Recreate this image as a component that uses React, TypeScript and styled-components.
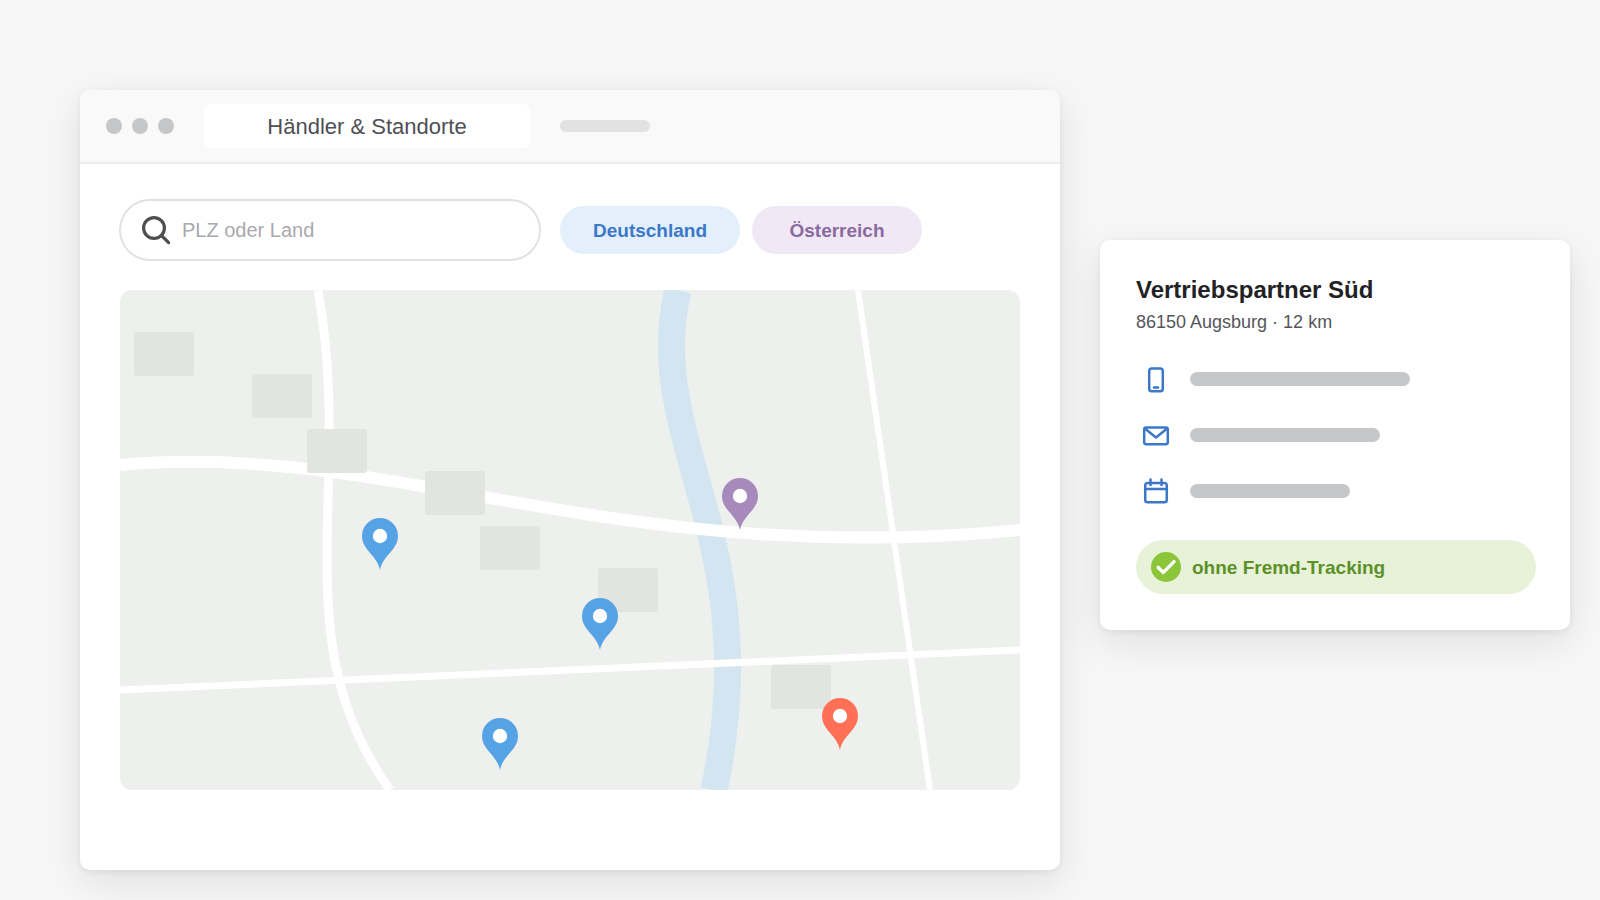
import React from "react";
import styled, { createGlobalStyle } from "styled-components";

const GlobalStyle = createGlobalStyle`
  *, *::before, *::after { box-sizing: border-box; }
  body {
    margin: 0;
    background: #f7f7f7;
    font-family: "Liberation Sans", Arial, Helvetica, sans-serif;
  }
`;

const Page = styled.main`
  display: grid;
  grid-template-columns: minmax(0, 980fr) minmax(0, 470fr);
  align-items: start;
  gap: 40px;
  min-height: 100vh;
  padding: 90px 30px 30px 80px;
`;

const Panel = styled.section`
  border-radius: 10px;
  background: #fff;
  box-shadow: 0 2px 6px rgba(30, 20, 40, 0.07), 0 12px 40px rgba(30, 20, 40, 0.1);
`;

const BrowserWindow = styled(Panel)`
  overflow: hidden;
`;

const TitleBar = styled.header`
  display: flex;
  align-items: center;
  gap: 30px;
  height: 74px;
  padding: 0 26px;
  border-bottom: 2px solid #ececec;
  background: #f9f9f9;
`;

const WindowDots = styled.div`
  display: flex;
  gap: 10px;
`;

const Dot = styled.span`
  width: 16px;
  height: 16px;
  border-radius: 50%;
  background: #c6c7c9;
`;

const TabTitle = styled.h1`
  flex: 0 1 326px;
  margin: 0;
  padding: 11px 0 9px;
  border-radius: 6px;
  background: #fff;
  color: #4e4e55;
  font-size: 22px;
  font-weight: 400;
  line-height: 24px;
  text-align: center;
`;

const Bar = styled.span<{ $width: number; $height: number; $color: string }>`
  flex: 0 1 ${(p) => p.$width}px;
  height: ${(p) => p.$height}px;
  border-radius: ${(p) => p.$height / 2}px;
  background: ${(p) => p.$color};
`;

const WindowBody = styled.div`
  display: flex;
  flex-direction: column;
  gap: 30px;
  padding: 36px 40px 80px;
`;

const Filters = styled.form`
  display: flex;
  align-items: center;
  gap: 20px;
`;

const SearchField = styled.label`
  display: flex;
  flex: 0 1 420px;
  align-items: center;
  gap: 10px;
  min-width: 0;
  height: 60px;
  padding: 0 19px;
  border: 1px solid #e1e1e2;
  border-radius: 30px;
  background: #fff;
  box-shadow: 0 0 0 1px #e1e1e2;

  svg {
    flex: none;
  }
`;

const SearchInput = styled.input`
  flex: 1;
  min-width: 0;
  padding: 0;
  border: 0;
  outline: 0;
  background: transparent;
  color: #4e4e55;
  font: 20px/24px "Liberation Sans", Arial, Helvetica, sans-serif;

  &::placeholder {
    color: #a9a9ae;
    opacity: 1;
  }
`;

const Chips = styled.div`
  display: flex;
  gap: 12px;
`;

const Chip = styled.button<{ $width: number; $bg: string; $fg: string }>`
  width: ${(p) => p.$width}px;
  height: 48px;
  padding: 2px 0 0;
  border: 0;
  border-radius: 24px;
  background: ${(p) => p.$bg};
  color: ${(p) => p.$fg};
  font: bold 19px/24px "Liberation Sans", Arial, Helvetica, sans-serif;
  cursor: pointer;
`;

const MapCanvas = styled.svg`
  display: block;
  width: 100%;
  height: auto;
  border-radius: 12px;
  background: #edf0ec;
`;

const Card = styled(Panel)`
  margin-top: 150px;
  padding: 36px 34px 36px 36px;
`;

const CardTitle = styled.h2`
  margin: 0 0 6px;
  color: #222226;
  font-size: 24px;
  line-height: 28px;
`;

const CardMeta = styled.p`
  margin: 0;
  color: #55555c;
  font-size: 18px;
  line-height: 24px;
`;

const ContactList = styled.ul`
  display: flex;
  flex-direction: column;
  gap: 26px;
  margin: 30px 0 34px;
  padding: 0;
  list-style: none;
`;

const ContactRow = styled.li`
  display: flex;
  align-items: center;
  gap: 14px;
  height: 30px;
`;

const ContactIcon = styled.svg`
  flex: none;
  width: 40px;
  height: 30px;
  fill: none;
  stroke: #3b78c8;
  stroke-width: 2.5;
  stroke-linecap: round;
  stroke-linejoin: round;
`;

const Badge = styled.p`
  display: flex;
  align-items: center;
  gap: 11px;
  height: 54px;
  margin: 0;
  padding: 0 15px;
  border-radius: 27px;
  background: #e7f2d9;
  color: #5b9127;
  font-size: 19px;
  font-weight: 700;
  line-height: 24px;
`;

const BadgeText = styled.span`
  padding-top: 2px;
`;

const buildings = [
  [14, 42],
  [132, 84],
  [187, 139],
  [305, 181],
  [360, 236],
  [478, 278],
  [651, 375],
];

const pins = [
  { x: 260, y: 280, color: "#55a2e4" },
  { x: 480, y: 360, color: "#55a2e4" },
  { x: 380, y: 480, color: "#55a2e4" },
  { x: 620, y: 240, color: "#a78abb" },
  { x: 720, y: 460, color: "#ff7056" },
];

function DealerMap() {
  return (
    <MapCanvas viewBox="0 0 900 500" role="img" aria-label="Karte der Standorte">
      <path d="M558 0C522 150 648 250 594 500" fill="none" stroke="#d2e5f1" strokeWidth="27" />
      <g fill="none" stroke="#fff">
        <path d="M0 175C270 150 495 280 900 240" strokeWidth="12" />
        <path d="M198 0C234 200 162 350 270 500" strokeWidth="9" />
        <path d="M0 400L900 360" strokeWidth="7" />
        <path d="M738 0L810 500" strokeWidth="6" />
      </g>
      {buildings.map(([x, y]) => (
        <rect key={x} x={x} y={y} width="60" height="44" rx="3" fill="#e2e5df" />
      ))}
      {pins.map((pin) => (
        <g key={pin.x} transform={`translate(${pin.x} ${pin.y})`}>
          <path
            d="M0 0C-3 -15 -18 -20 -18 -34A18 18 0 0 1 18 -34C18 -20 3 -15 0 0Z"
            fill={pin.color}
          />
          <circle cy="-34" r="7.2" fill="#fff" />
        </g>
      ))}
    </MapCanvas>
  );
}

export default function App() {
  return (
    <>
      <GlobalStyle />
      <Page>
        <BrowserWindow>
          <TitleBar>
            <WindowDots>
              <Dot />
              <Dot />
              <Dot />
            </WindowDots>
            <TabTitle>Händler &amp; Standorte</TabTitle>
            <Bar $width={90} $height={12} $color="#e2e2e3" />
          </TitleBar>
          <WindowBody>
            <Filters onSubmit={(e) => e.preventDefault()}>
              <SearchField>
                <svg width="32" height="32" viewBox="0 0 32 32" fill="none" stroke="#4e4e50" strokeWidth="3.2" strokeLinecap="round" aria-hidden="true">
                  <circle cx="14" cy="14" r="10.4" />
                  <path d="M21.6 21.6L28.6 28.6" />
                </svg>
                <SearchInput type="text" placeholder="PLZ oder Land" aria-label="PLZ oder Land" />
              </SearchField>
              <Chips>
                <Chip type="button" $width={180} $bg="#e3effb" $fg="#3b78c8">
                  Deutschland
                </Chip>
                <Chip type="button" $width={170} $bg="#f0e9f5" $fg="#8a6ba1">
                  Österreich
                </Chip>
              </Chips>
            </Filters>
            <DealerMap />
          </WindowBody>
        </BrowserWindow>

        <Card>
          <CardTitle>Vertriebspartner Süd</CardTitle>
          <CardMeta>86150 Augsburg · 12 km</CardMeta>
          <ContactList>
            <ContactRow>
              <ContactIcon viewBox="0 0 40 30" aria-hidden="true">
                <rect x="13.2" y="4.5" width="13.6" height="22.8" rx="2.6" />
                <path d="M18 23.6H22" />
              </ContactIcon>
              <Bar $width={220} $height={14} $color="#c6c7c9" />
            </ContactRow>
            <ContactRow>
              <ContactIcon viewBox="0 0 40 30" aria-hidden="true">
                <rect x="8.2" y="7.4" width="23.6" height="16.8" rx="2" />
                <path d="M8.8 8.6L20 17.4L31.2 8.6" />
              </ContactIcon>
              <Bar $width={190} $height={14} $color="#c6c7c9" />
            </ContactRow>
            <ContactRow>
              <ContactIcon viewBox="0 0 40 30" aria-hidden="true">
                <rect x="9.2" y="6.9" width="21.6" height="19.4" rx="2.6" />
                <path d="M9.2 13H30.8M14.5 3.6V9M25.5 3.6V9" />
              </ContactIcon>
              <Bar $width={160} $height={14} $color="#c6c7c9" />
            </ContactRow>
          </ContactList>
          <Badge>
            <svg width="30" height="30" viewBox="0 0 30 30" aria-hidden="true">
              <circle cx="15" cy="15" r="15" fill="#8bc53a" />
              <path d="M7.2 15.4L12.4 20.4L23 9.6" fill="none" stroke="#fff" strokeWidth="3.4" strokeLinecap="round" strokeLinejoin="round" />
            </svg>
            <BadgeText>ohne Fremd-Tracking</BadgeText>
          </Badge>
        </Card>
      </Page>
    </>
  );
}
